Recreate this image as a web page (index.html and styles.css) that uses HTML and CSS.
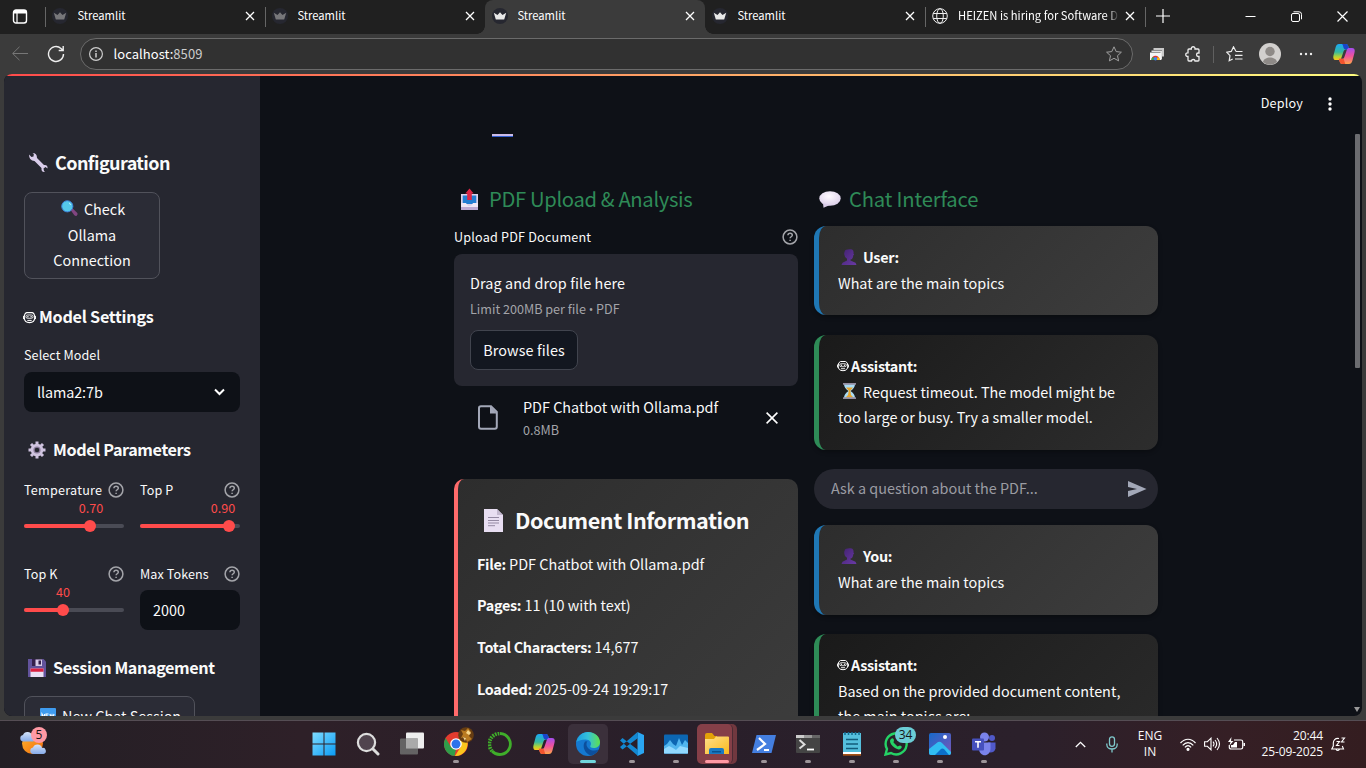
FILE: index.html
```html
<!DOCTYPE html>
<html lang="en">
<head>
<meta charset="utf-8">
<title>Streamlit</title>
<link rel="stylesheet" href="styles.css">
</head>
<body>
<svg class="defs" aria-hidden="true">
  <defs>
    <linearGradient id="cpA" x1="0" y1="0" x2="0" y2="1"><stop offset="0" stop-color="#1ba8f5"/><stop offset=".5" stop-color="#35b8a0"/><stop offset=".8" stop-color="#b7d433"/><stop offset="1" stop-color="#ffc21a"/></linearGradient>
    <linearGradient id="cpB" x1="0" y1="0" x2="0" y2="1"><stop offset="0" stop-color="#a34df0"/><stop offset=".5" stop-color="#f0529c"/><stop offset="1" stop-color="#ffa54a"/></linearGradient>
    <linearGradient id="winG" x1="0" y1="0" x2="1" y2="1"><stop offset="0" stop-color="#7fdcff"/><stop offset="1" stop-color="#0a9bf5"/></linearGradient>
    <linearGradient id="edgeG" x1="0" y1="0" x2="1" y2="0"><stop offset="0" stop-color="#1b9de2"/><stop offset=".5" stop-color="#35c1d8"/><stop offset="1" stop-color="#5fe04c"/></linearGradient>
    <linearGradient id="foldG" x1="0" y1="0" x2="1" y2="1"><stop offset="0" stop-color="#ffe08a"/><stop offset="1" stop-color="#fbb91c"/></linearGradient>
    <linearGradient id="sunG" x1="0" y1="0" x2="1" y2="1"><stop offset="0" stop-color="#ffb52e"/><stop offset="1" stop-color="#f06a0c"/></linearGradient>
    <linearGradient id="cloudG" x1="0" y1="0" x2="0" y2="1"><stop offset="0" stop-color="#d5e4fb"/><stop offset="1" stop-color="#86abe9"/></linearGradient>
    <linearGradient id="phG" x1="0" y1="0" x2="1" y2="1"><stop offset="0" stop-color="#1669c9"/><stop offset="1" stop-color="#7a55b8"/></linearGradient>
    <linearGradient id="userG" x1="0" y1="0" x2="1" y2="1"><stop offset="0" stop-color="#422270"/><stop offset="1" stop-color="#6a3aa6"/></linearGradient>
    <radialGradient id="bubG" cx=".45" cy=".35" r=".7"><stop offset="0" stop-color="#fffaff"/><stop offset="1" stop-color="#d9cce8"/></radialGradient>
    <symbol id="x" viewBox="0 0 10 10"><path d="M1 1l8 8M9 1L1 9" fill="none" stroke="currentColor" stroke-width="1.3"/></symbol>
    <symbol id="crown" viewBox="0 0 16 16"><circle cx="8" cy="8" r="8" fill="#262730"/><path d="M1.800 4.800L5.500 7 8 4.300 10.500 7l3.700-2.200-2 6.700H3.800z" fill="currentColor"/></symbol>
    <symbol id="help" viewBox="0 0 16 16"><circle cx="8" cy="8" r="6.900" fill="none" stroke="currentColor" stroke-width="1.500"/><path d="M5.900 6.300c.1-1.200 1-2 2.200-2s2.200.8 2.200 1.900c0 1.500-2.200 1.600-2.200 3.100M8.100 10.700v1.300" fill="none" stroke="currentColor" stroke-width="1.500"/></symbol>
    <symbol id="robot" viewBox="0 0 12 12"><path d="M3.500 1.500h5q2.300.5 2.300 4.500 0 4.700-4.800 4.700T1.200 6q0-4 2.300-4.500z" fill="none" stroke="#fff"/><path d="M.5 4.500v3M11.500 4.500v3M4 8.700h4" fill="none" stroke="#fff" stroke-width=".9"/><rect x="2.700" y="3.700" width="6.600" height="3" rx="1.400" fill="none" stroke="#fff" stroke-width=".8"/><circle cx="4.500" cy="5.200" r=".7" fill="#fff"/><circle cx="7.500" cy="5.200" r=".7" fill="#fff"/></symbol>
    <symbol id="user" viewBox="0 0 16 16"><path d="M4 1.500C5 .2 8 .2 10 .2q3 .5 2.500 4.500l.7 1-.9.5q-.3 4-2.800 4.400v.8l5 2.300 1 2.300H.5l1-2.300 4.500-2.300V9.700Q3 8 3.200 4z" fill="url(#userG)"/></symbol>
    <symbol id="copilot" viewBox="0 0 22 22"><path d="M6 1h6.500c2 0 2.500 1 3 3l.7 2.500h-3.500q-1.500 0-2 1.500L8.500 14.500C7.800 16.500 7.300 17 5.500 17H3C-.2 17 0 14 .7 11.500l2-7.500C3.300 2 4.300 1 6 1z" fill="url(#cpA)"/><path d="M9 1h3.800c2 0 2.300 1.200 3 3.500l.5 2h-3.600q-2 0-2.500-3C10 2.300 9.700 1.500 9 1z" fill="#1a45cb"/><path d="M16 21H9.500c-2 0-2.500-1-3-3l-.7-2.200h3.500q1.500 0 2-1.500l2.300-6.800C14.300 5.500 14.800 5 16.500 5H19c3.200 0 3 3 2.300 5.500l-2 7.500c-.6 2-1.600 3-3.300 3z" fill="url(#cpB)"/><path d="M5.800 15.800h3.500q2 0 2 2.200l1 3H9.500c-2 0-2.500-1-3-3z" fill="#f3542e"/></symbol>
  </defs>
</svg>

<div class="tabstrip">
  <div class="workspace"><svg width="16" height="15" viewBox="0 0 16 15"><rect x="1.500" y="1" width="13" height="13" rx="2.500" fill="none" stroke="#fff" stroke-width="1.400"/><path d="M1.500 3q0-2 2-2h9q2 0 2 2v1.500h-13z" fill="#fff"/><path d="M5 4v10" stroke="#fff" stroke-width="1.200"/></svg></div>
  <div class="tab sep"><svg class="fav dim"><use href="#crown"/></svg><span>Streamlit</span><svg class="x"><use href="#x"/></svg></div>
  <div class="tab sep"><svg class="fav dim"><use href="#crown"/></svg><span>Streamlit</span><svg class="x"><use href="#x"/></svg></div>
  <div class="tab active"><svg class="fav"><use href="#crown"/></svg><span>Streamlit</span><svg class="x"><use href="#x"/></svg></div>
  <div class="tab"><svg class="fav"><use href="#crown"/></svg><span>Streamlit</span><svg class="x"><use href="#x"/></svg></div>
  <div class="tab sep"><svg class="fav" viewBox="0 0 16 16" fill="none" stroke="#eee"><circle cx="8" cy="8" r="7.300"/><ellipse cx="8" cy="8" rx="3.300" ry="7.300"/><path d="M1.200 5.500h13.600M1.200 10.500h13.600"/></svg><span class="fade">HEIZEN is hiring for Software D</span><svg class="x"><use href="#x"/></svg></div>
  <div class="newtab sep"><svg width="14" height="14" viewBox="0 0 14 14"><path d="M7 0v14M0 7h14" stroke="#fff" stroke-width="1.200"/></svg></div>
  <div class="winctl">
    <svg width="11" height="11" viewBox="0 0 11 11"><path d="M.5 5.500h10" stroke="#fff"/></svg>
    <svg width="11" height="11" viewBox="0 0 11 11" fill="none" stroke="#fff"><rect x=".5" y="2.500" width="8" height="8" rx="1.500"/><path d="M2.500 .8h5.500q2.500 0 2.500 2.500v5"/></svg>
    <svg width="11" height="11" viewBox="0 0 11 11"><path d="M.5.5l10 10M10.500.5l-10 10" stroke="#fff" stroke-width="1.200"/></svg>
  </div>
</div>

<div class="toolbar">
  <svg class="back" width="17" height="16" viewBox="0 0 17 16" fill="none" stroke="#777"><path d="M16 7.500H.7M7.500.8L.7 7.500l6.800 6.700"/></svg>
  <svg class="reload" width="18" height="18" viewBox="0 0 18 18" fill="none" stroke="#eee" stroke-width="1.400"><path d="M16.500 9A7.500 7.500 0 1 1 14 3.400L16 5.200M16.200 1v4.500h-4.500"/></svg>
  <div class="address">
    <svg width="14" height="14" viewBox="0 0 14 14" fill="none" stroke="#ccc" stroke-width="1.200"><circle cx="7" cy="7" r="6.400"/><path d="M7 6v4.500M7 3.500V5" stroke-width="1.500"/></svg>
    <span>localhost:<i>8509</i></span>
    <svg class="star" width="16" height="16" viewBox="0 0 16 16" fill="none" stroke="#a0a0a0"><path d="M8 .8l2.200 4.800 5.200.6-3.900 3.500 1.100 5.200L8 12.300l-4.600 2.600 1.100-5.200L.6 6.200l5.200-.6z"/></svg>
  </div>
  <div class="tools">
    <svg width="16" height="16" viewBox="0 0 16 16"><path d="M4.500 2h10.500v8.500h-2V4h-8.500z" fill="#c9c9c9"/><path d="M2.500 4.500H13v9h-1.500V6h-9z" fill="#e2e2e2"/><path d="M1 6.500h11V14H1z" fill="#f5f5f5"/><path d="M2.300 14a4.200 4.200 0 0 1 8.400 0z" fill="#e2382c"/><path d="M2.300 14a4.200 4.200 0 0 1 1.700-3.300l2 3.300z" fill="#34a853"/><path d="M10.700 14A4.200 4.200 0 0 0 9 10.700L7 14z" fill="#fbbc04"/><circle cx="6.500" cy="12.800" r="1.700" fill="#4285f4"/></svg>
    <svg width="17" height="17" viewBox="0 0 17 17" fill="none" stroke="#eee" stroke-width="1.300"><path d="M4 3h2.300c-.3-3 4-3 3.700 0h3q1 0 1 1v3h-.8c-2.200 0-2.200 3.500 0 3.500h.8V14q0 1-1 1h-3c0-2-3.500-2-3.500 0H4q-1 0-1-1v-3.500c-3 .3-3-4 0-3.700V4q0-1 1-1z"/></svg>
    <b class="vline"></b>
    <svg width="17" height="16" viewBox="0 0 17 16" fill="none" stroke="#eee" stroke-width="1.200"><path d="M10 5.500L7.500.8 5.300 5.400.7 6.200 4 9.600l-.8 5.200 3.500-1.800M10 5.500h6.500M9 9.300h7.500M9 13h7.500"/></svg>
    <svg width="22" height="22" viewBox="0 0 22 22"><circle cx="11" cy="11" r="11" fill="#d2d0ce"/><circle cx="11" cy="8.500" r="4.700" fill="#8e8a87"/><path d="M4 19c1-6 13-6 14 0q-3 2.800-7 2.800T4 19z" fill="#8e8a87"/></svg>
    <svg width="14" height="4" viewBox="0 0 14 4" fill="#eee"><circle cx="2" cy="2" r="1.200"/><circle cx="7" cy="2" r="1.200"/><circle cx="12" cy="2" r="1.200"/></svg>
    <svg width="22" height="22"><use href="#copilot"/></svg>
  </div>
</div>

<div class="viewport">
  <div class="rainbow"></div>
  <aside class="sidebar">
    <h2 class="conf"><svg width="20" height="20" viewBox="0 0 20 20"><path d="M1 1.500L3.500 4l2-.5L5.800 1 4.500 0Q9 0 9 5l7 7q4-.5 3.500 3.500L17.500 14l-2 1.500.5 2.500 1 1q-4 .5-3.500-4L6.500 8Q1 8 1 1.500z" fill="#d9cdea"/></svg><span>Configuration</span></h2>
    <div class="btn check"><div><svg width="17" height="17" viewBox="0 0 17 17"><path d="M9.500 10l2-1.800 4.800 4.800q.8 1.500-.6 2.700-1.200.8-2.500-.6z" fill="#814581"/><circle cx="6.300" cy="6.300" r="5.600" fill="#55c8eb" stroke="#3d80d6"/><path d="M8 3q1.500.5 1.500 2" stroke="#b5efff" fill="none"/></svg><span>Check</span></div><div>Ollama</div><div>Connection</div></div>
    <h3 class="ms"><svg width="13" height="13"><use href="#robot"/></svg><span>Model Settings</span></h3>
    <label class="lab sm">Select Model</label>
    <div class="select"><span>llama2:7b</span><svg width="11" height="8" viewBox="0 0 11 8"><path d="M1 1.500l4.500 4.500L10 1.500" fill="none" stroke="#fff" stroke-width="2"/></svg></div>
    <h3 class="mp"><svg width="18" height="18" viewBox="0 0 18 18"><g stroke="#cfc3df" stroke-width="3"><path d="M9 .5v17M.5 9h17M3 3l12 12M15 3L3 15"/></g><circle cx="9" cy="9" r="6.300" fill="#cfc3df"/><circle cx="9" cy="9" r="3.600" fill="#8b7c9b"/><circle cx="9" cy="9" r="2.300" fill="#262730"/></svg><span>Model Parameters</span></h3>
    <div class="params">
      <div class="param"><div class="lab temp">Temperature<svg class="help"><use href="#help"/></svg></div><div class="val" style="left:67px">0.70</div><div class="track"><b style="width:66px"></b></div></div>
      <div class="param"><div class="lab">Top P<svg class="help"><use href="#help"/></svg></div><div class="val" style="left:83px">0.90</div><div class="track"><b style="width:89px"></b></div></div>
      <div class="param"><div class="lab">Top K<svg class="help"><use href="#help"/></svg></div><div class="val" style="left:39px">40</div><div class="track"><b style="width:39px"></b></div></div>
      <div class="param"><div class="lab">Max Tokens<svg class="help"><use href="#help"/></svg></div><div class="number">2000</div></div>
    </div>
    <h3 class="sess"><svg width="18" height="18" viewBox="0 0 18 18"><path d="M0 0h15.500L18 2.500V18H0z" fill="#62539c"/><path d="M4 0h10v7H4z" fill="#34204b"/><path d="M7.500.5h6.500V7H7.500z" fill="#d8cce8"/><path d="M10.500 1.500h2.500v4h-2.500z" fill="#34204b"/><path d="M2.500 9.500h13V18h-13z" fill="#eadff5"/><path d="M2.500 9.500h13v3.300h-13z" fill="#d92041"/></svg><span>Session Management</span></h3>
    <div class="btn newchat"><svg width="16" height="16" viewBox="0 0 16 16"><rect width="16" height="16" rx="1" fill="#3f9cf0"/><path d="M2 10V6l2.500 4V6M8.500 6H6v4h2.500M6 8h2M10 6l1 4 1-3 1 3 1-4" fill="none" stroke="#fff" stroke-width="1.100"/></svg><span>New Chat Session</span></div>
  </aside>

  <main class="main">
    <header class="apphead"><span>Deploy</span><svg width="4" height="14" viewBox="0 0 4 14" fill="#fff"><circle cx="2" cy="2" r="1.700"/><circle cx="2" cy="7" r="1.700"/><circle cx="2" cy="12" r="1.700"/></svg></header>
    <div class="dash"></div>
    <div class="columns">
      <section class="col">
        <h1><svg width="20" height="23" viewBox="0 0 20 23"><path d="M1 6h17v16H1z" fill="#ddd2ea"/><path d="M2.700 7.500h13.600V16H2.700z" fill="#237dd1"/><path d="M1 18h17v4H1z" fill="#bba9d2"/><path d="M1 15h5l2 3h3l2-3h5v4H1z" fill="#eee6f5"/><path d="M9.500.5l4.200 5h-1.900V12H7.200V5.500H5.300z" fill="#dc2646"/></svg><span class="t-up">PDF Upload &amp; Analysis</span></h1>
        <div class="lab uplab">Upload PDF Document<svg class="help"><use href="#help"/></svg></div>
        <div class="drop"><p>Drag and drop file here</p><small>Limit 200MB per file <i>•</i> PDF</small><div class="browse">Browse files</div></div>
        <div class="file"><svg width="20" height="25" viewBox="0 0 20 25"><path d="M3 1.200h10L18.800 7v14.500q0 2.300-2 2.300H3q-2 0-2-2V3q0-1.800 2-1.800z" fill="none" stroke="#a3a8b8" stroke-width="2"/><path d="M12 1v7.500h7z" fill="#a3a8b8"/></svg><div><p>PDF Chatbot with Ollama.pdf</p><small>0.8MB</small></div><svg class="rm" width="12" height="12" viewBox="0 0 10 10"><path d="M.5.5l9 9M9.500.5l-9 9" stroke="#fff" stroke-width="1.300"/></svg></div>
        <div class="doc">
          <h2><svg width="19" height="23" viewBox="0 0 19 23"><path d="M0 0h13l6 6v17H0z" fill="#e8def2"/><path d="M13 0v6h6z" fill="#c3b8cf"/><path d="M4 8.500h11M4 11.500h11M4 14h11M4 16.700h7" stroke="#9489a3"/></svg><span>Document Information</span></h2>
          <p><b>File:</b> PDF Chatbot with Ollama.pdf</p>
          <p><b>Pages:</b> 11 (10 with text)</p>
          <p><b>Total Characters:</b> 14,677</p>
          <p><b>Loaded:</b> 2025-09-24 19:29:17</p>
        </div>
      </section>
      <section class="col">
        <h1 class="chat"><svg width="22" height="17" viewBox="0 0 22 17"><ellipse cx="11" cy="7.500" rx="10.700" ry="7.300" fill="url(#bubG)"/><path d="M4 12l.5 4.700L11 14z" fill="#d9cce8"/></svg><span>Chat Interface</span></h1>
        <div class="msg you"><div class="who"><svg width="16" height="16"><use href="#user"/></svg><b>User:</b></div><p>What are the main topics</p></div>
        <div class="msg bot"><div class="who"><svg width="12" height="12"><use href="#robot"/></svg><b>Assistant:</b></div><p class="wait"><svg width="13" height="16" viewBox="0 0 13 16"><path d="M1 1h11q0 4-4.500 7 4.500 3 4.500 7H1q0-4 4.500-7Q1 5 1 1z" fill="#a9dcf5"/><path d="M3 4.500h7L7.300 7.700 8 12l2.500 2.500h-8L5 12l.8-4.300z" fill="#e9a52e"/><path d="M0 0h13v1.700H0zM0 14.300h13V16H0z" fill="#948da0"/></svg>Request timeout. The model might be</p><p>too large or busy. Try a smaller model.</p></div>
        <div class="ask"><span>Ask a question about the PDF...</span><svg width="19" height="16" viewBox="0 0 19 16"><path d="M0 0l18.500 8L0 16v-6l9-2-9-2z" fill="#a3a8b8"/></svg></div>
        <div class="msg you"><div class="who"><svg width="16" height="16"><use href="#user"/></svg><b>You:</b></div><p>What are the main topics</p></div>
        <div class="msg bot last"><div class="who"><svg width="12" height="12"><use href="#robot"/></svg><b>Assistant:</b></div><p>Based on the provided document content,</p><p>the main topics are:</p></div>
      </section>
    </div>
    <div class="thumb"></div><div class="arrow"></div>
  </main>
</div>

<div class="taskbar">
  <div class="weather"><svg width="28" height="28" viewBox="0 0 28 28"><circle cx="12.500" cy="15.500" r="10.500" fill="url(#sunG)"/><path d="M3 13.500a3.300 3.300 0 0 1 0-6.500 4.700 4.700 0 0 1 9 .5 3 3 0 0 1 1 6z" fill="url(#cloudG)"/><path d="M13 26a3.300 3.300 0 0 1 0-6.500 4.700 4.700 0 0 1 9 .5 3 3 0 0 1 1.500 6z" fill="url(#cloudG)"/></svg><span class="badge red">5</span></div>
  <div class="apps">
    <div class="app"><svg viewBox="0 0 24 24" fill="url(#winG)"><path d="M.5.500h11v11h-11zM12.500.500h11v11h-11zM.5 12.500h11v11h-11zM12.500 12.500h11v11h-11z"/></svg></div>
    <div class="app"><svg viewBox="0 0 24 24"><circle cx="10.500" cy="10.500" r="8.600" fill="#50444e" stroke="#ddd" stroke-width="2.200"/><path d="M17 17l5 5" stroke="#ddd" stroke-width="3" stroke-linecap="round"/></svg></div>
    <div class="app"><svg viewBox="0 0 24 24"><rect x="6" y=".5" width="18" height="16" rx="1" fill="#eee"/><rect x="0" y="6.500" width="18" height="16" rx="1" fill="#686868" opacity=".93"/><path d="M6 6.500h12v10H6z" fill="#aaa"/></svg></div>
    <div class="app run"><svg viewBox="0 0 24 24"><circle cx="12" cy="12" r="12" fill="#e33b2e"/><path d="M1.600 6L7 15l5 2.500L10.500 24A12 12 0 0 1 1.600 6z" fill="#2f9e4a"/><path d="M22.500 7H12l5 7.500-6 9.400A12 12 0 0 0 22.500 7z" fill="#fbc61d"/><circle cx="12" cy="12" r="5.800" fill="#fff"/><circle cx="12" cy="12" r="4.500" fill="#2d72ea"/></svg><svg class="face" viewBox="0 0 16 16"><circle cx="8" cy="8" r="7.800" fill="#663c12"/><path d="M3 3l4 1 3-3 3 4-2 4 3 3-5 3-2-5-4 1 2-4z" fill="#b97a20"/><path d="M10 3l3 3-2 2-3-2zM5 10l3 1-1 3z" fill="#f7d68a"/></svg></div>
    <div class="app"><svg viewBox="0 0 24 24" fill="none" stroke="#3fae2a"><path d="M12 1.500a10.500 10.500 0 1 1-8 17.500" stroke-width="2.800"/><path d="M4 19A10.500 10.500 0 0 1 12 1.500" stroke-width="3.800" stroke-dasharray="1.700 1"/></svg></div>
    <div class="app"><svg viewBox="-1 -1 24 24"><use href="#copilot" width="22" height="22"/></svg></div>
    <div class="app run focus"><svg viewBox="0 0 24 24"><circle cx="12" cy="12" r="12" fill="#1579d0"/><path d="M.3 10C1.500 4 6.500 0 12 0c7.500 0 12 5.500 12 10 0 4-3 6-6.500 6-2.500 0-4-1-3-2.500C16 11 14 7.500 9.500 7.500 5 7.500 1.500 9 .3 10z" fill="url(#edgeG)"/><path d="M9 9.500c-3 4-1 12 6 14 3-.5 6-3 7.500-6-5 2.500-11 .5-12-4.500q-.3-2.500 1-3.800z" fill="#0c4f9c"/></svg></div>
    <div class="app run"><svg viewBox="0 0 24 24"><path d="M17.500 0L24 3v18l-6.500 3z" fill="#2aa6f2"/><path d="M17.500 0L0 15l2.500 2.500L18 6zM0 8.500L2.500 6 18 18v6z" fill="#1388d2"/></svg></div>
    <div class="app run"><svg viewBox="0 0 24 24"><rect y="2.500" width="24" height="19" rx="1" fill="#0c66b2"/><path d="M0 14l3-2 3-4 3 4 3 2 3-8 3 7 3-5 3 3v9.500q0 1-1 1H1q-1 0-1-1z" fill="#50b5ee"/><path d="M0 17l5-3 4 2 3 2 4-4 8 2v5.500H0z" fill="#91d9ff"/></svg></div>
    <div class="app run files"><svg viewBox="0 0 24 24"><path d="M0 3q0-2 2-2h5l2.500 3H12v4H0z" fill="#e3a108"/><path d="M0 7h9l2-2.500h12q1 0 1 1V22H0z" fill="url(#foldG)"/><path d="M4 22v-4q0-2 2-2h11q2 0 2 2v4z" fill="#197ac4"/><path d="M7 19h9v1.500H7z" fill="#07518f"/></svg></div>
    <div class="app run"><svg viewBox="0 0 24 24"><path d="M4.500 3H24l-4.500 18H0z" fill="#447fe0"/><path d="M7 6l6 6-8 6M12 18h5" fill="none" stroke="#fff" stroke-width="2.200"/></svg></div>
    <div class="app run"><svg viewBox="0 0 24 24"><rect y="3" width="24" height="18" rx="1" fill="#444"/><path d="M0 3h8v3H0z" fill="#ccc"/><path d="M8 3h8v3H8z" fill="#999"/><path d="M16 3h8v3h-8z" fill="#666"/><path d="M3.500 8l5 4.500-5 4" fill="none" stroke="#ddd" stroke-width="2"/><path d="M11 17.500h7" stroke="#fff" stroke-width="1.800"/></svg></div>
    <div class="app run"><svg viewBox="0 0 24 24"><rect x="3" y="1" width="18" height="21" fill="#55bfdd"/><path d="M3 20h18v2H3z" fill="#fff"/><path d="M3 22h18v1.700H3z" fill="#a65217"/><path d="M6 7.500h12M6 12h12M6 16.500h12" stroke="#125c7b" stroke-width="1.500"/><path d="M5 0v3M8.500 0v3M12 0v3M15.500 0v3M19 0v3" stroke="#126b91" stroke-width="1.500"/></svg></div>
    <div class="app run"><svg viewBox="0 0 24 24"><path d="M1.500 22.500L3 17A10.500 10.500 0 1 1 7 21z" fill="#282129" stroke="#25d366" stroke-width="2.400"/><path d="M7 7q2-2 3 1l-.5 2.500 4 4 2.500-1q3 1 1 3-2 2-6-.5-5-3.500-5-7Q6 8 7 7z" fill="#25d366"/></svg><span class="badge cyan">34</span></div>
    <div class="app run"><svg viewBox="0 0 24 24"><rect x="1" y="1" width="22" height="22" rx="2" fill="url(#phG)"/><path d="M1 17l9-7q2-1 4 1l9 9v1q0 2-2 2H3q-2 0-2-2z" fill="#31bdf2"/><path d="M7 23l6-6q1-1 3 0l5 6z" fill="#0b6fc9"/><circle cx="17" cy="5" r="2" fill="#fff"/></svg></div>
    <div class="app run"><svg viewBox="0 0 24 24"><circle cx="12.500" cy="5" r="4.500" fill="#7b83eb"/><circle cx="20" cy="6" r="3" fill="#5059c9"/><path d="M16 10.500h7.500v6q-1 4.500-6 4z" fill="#5059c9"/><path d="M7 10.500h11.500v6c0 9-11.500 9-11.500 0z" fill="#7b83eb"/><rect y="6.500" width="12" height="12" rx="1" fill="#4650bd"/><path d="M3 9.700h6M6 9.700v6" stroke="#fff" stroke-width="1.600"/></svg></div>
  </div>
  <div class="tray">
    <svg class="up" width="11" height="7" viewBox="0 0 11 7"><path d="M.8 6L5.500 1.300 10.200 6" fill="none" stroke="#fff" stroke-width="1.300"/></svg>
    <svg class="mic" width="12" height="17" viewBox="0 0 12 17" fill="none" stroke="#7fc8cc" stroke-width="1.300"><rect x="3.500" y=".8" width="5" height="9.500" rx="2.500"/><path d="M.8 7.500v1c0 6 10.400 6 10.400 0v-1M6 13v3.500"/></svg>
    <div class="lang"><span>ENG</span><span>IN</span></div>
    <svg class="wifi" width="16" height="13" viewBox="0 0 16 13" fill="none" stroke="#fff" stroke-width="1.200"><path d="M.5 5c4.500-5 10.500-5 15 0M2.700 7.300c3.200-3.700 7.400-3.700 10.600 0M4.900 9.400c2-2.300 4.200-2.300 6.200 0"/><circle cx="8" cy="11.300" r="1" fill="#fff"/></svg>
    <svg class="vol" width="17" height="14" viewBox="0 0 17 14" fill="none" stroke="#fff" stroke-width="1.100"><path d="M.6 4.700h2.800L7 1.200v11.600L3.400 9.300H.6zM9 4.700q2 2.300 0 4.600M11 3q3.400 4 0 8M13 1q5 6 0 12"/></svg>
    <svg class="bat" width="17" height="14" viewBox="0 0 17 14"><path d="M6 3h7q1.700 0 1.700 1.700v5.600q0 1.700-1.700 1.700H3q-1.700 0-1.700-1.700V8" fill="none" stroke="#fff" stroke-width="1.200"/><path d="M15.500 6h1.500v3h-1.500zM3 8h2l2-3h2v5.500H3zM3.500 0L0 5h2.500l-1 3.500L5.500 4H3z" fill="#fff"/></svg>
    <div class="clock"><span>20:44</span><span>25-09-2025</span></div>
    <svg class="bell" width="15" height="15" viewBox="0 0 15 15" fill="none" stroke="#fff" stroke-width="1.100"><path d="M8 1.500C4 .8 2.300 3.500 2.300 6v3L.8 12h11.700l-1.200-3M5 12.300q1.500 2.500 3.500 0M5.500 4.500h3l-3 4h3M10.500 1h3l-3 4h3"/></svg>
  </div>
</div>
</body>
</html>
```

FILE: styles.css
```css
* { box-sizing: border-box; margin: 0; padding: 0; }
body { width: 1366px; height: 768px; overflow: hidden; background: #3b3b3b; color: #fafafa; font: 14.4px/26px "Noto Sans CJK SC", "Noto Sans", sans-serif; display: flex; flex-direction: column; white-space: nowrap; }
svg { flex: none; display: block; }
.defs { position: absolute; width: 0; height: 0; }
i { font-style: normal; }
small { display: block; }

/* Tab strip */
.tabstrip { height: 34px; flex: none; background: #202020; display: flex; align-items: stretch; font-size: 11.2px; line-height: 32px; }
.workspace { width: 45px; padding: 9px 0 0 12px; }
.tab { width: 220px; display: flex; align-items: center; padding: 0 10px 2px 7px; position: relative; }
.tab .fav { width: 16px; height: 16px; color: #e8e8e8; }
.tab .dim { color: #77777a; }
.tab span { margin: -2px 0 0 9.5px; flex: 1; overflow: hidden; color: #fff; }
.tab .x { width: 10px; height: 10px; color: #fff; }
.tab .fade { margin-right: 7px; margin-left: 10px; -webkit-mask-image: linear-gradient(90deg, #000 150px, transparent 161px); mask-image: linear-gradient(90deg, #000 150px, transparent 161px); }
.active { background: #3b3b3b; border-radius: 8px 8px 0 0; }
.active::before, .active::after { content: ""; position: absolute; bottom: 0; width: 8px; height: 8px; }
.active::before { left: -8px; background: radial-gradient(circle at 0 0, transparent 7.5px, #3b3b3b 8px); }
.active::after { right: -8px; background: radial-gradient(circle at 100% 0, transparent 7.5px, #3b3b3b 8px); }
.sep { background: linear-gradient(#666, #666) 0 7px / 1px 20px no-repeat; }
.newtab { width: 90px; padding: 9px 0 0 11px; }
.winctl { display: flex; gap: 35px; padding: 11px 0 0 10px; }

/* Toolbar */
.toolbar { height: 40px; flex: none; display: flex; align-items: center; padding-left: 12px; }
.reload { margin-left: 18px; }
.address { width: 1053px; height: 32px; margin-left: 15px; border: 1px solid #6b6b6b; border-radius: 16px; background: #313131; display: flex; align-items: center; padding: 0 10px 0 8px; font-size: 13px; color: #fff; }
.address span { margin-left: 10.5px; letter-spacing: .05px; }
.address i { color: #ccc; }
.star { margin-left: auto; }
.tools { display: flex; align-items: center; flex: 1; margin-left: 16px; }
.tools > :nth-child(2) { margin-left: 20px; }
.vline { width: 1px; height: 17px; background: #606060; margin-left: 11px; }
.tools > :nth-child(4) { margin-left: 12px; }
.tools > :nth-child(5) { margin-left: 16px; }
.tools > :nth-child(6) { margin-left: 18px; }
.tools > :nth-child(7) { margin-left: 20px; }

/* Page */
.viewport { position: relative; height: 642px; flex: none; margin: 0 4px; border-radius: 8px; overflow: hidden; display: flex; background: #0e1117; padding-top: 2px; }
.rainbow { position: absolute; left: 0; right: 0; top: 0; height: 2px; background: linear-gradient(90deg, #ff4b4b, #fffd80); }
.sidebar { width: 256px; flex: none; background: #262730; padding: 75px 20px 0; display: flex; flex-direction: column; }
.sidebar h2, .sidebar h3 { display: flex; align-items: center; height: 24px; line-height: 24px; font-weight: 600; flex: none; }
.sidebar h2 span, .sidebar h3 span { margin-top: -2px; }
.sidebar h2 { font-size: 18px; padding-left: 4px; gap: 7px; letter-spacing: -.58px; }
.sidebar h3 { font-size: 16.2px; padding-left: 4px; gap: 7px; letter-spacing: -.4px; }
.sidebar h3.ms { padding-left: 0; gap: 3px; margin: 26px 0 0 -1px; letter-spacing: -.25px; }
.btn { border: 1px solid #51525b; border-radius: 8px; background: #2b2c36; flex: none; }
.check { width: 136px; height: 87px; margin-top: 17px; padding-top: 3px; text-align: center; line-height: 25.600px; }
.check div:first-child { display: flex; justify-content: center; align-items: center; gap: 6px; padding-left: 2px; }
.lab { font-size: 12.600px; line-height: 20px; height: 20px; display: flex; align-items: center; justify-content: space-between; flex: none; letter-spacing: .08px; }
.temp { letter-spacing: .25px; }
.help { width: 16px; height: 16px; color: #a3a4a9; }
.sm { margin-top: 16px; }
.select { height: 40px; margin-top: 7px; background: #0e1117; border-radius: 8px; display: flex; align-items: center; justify-content: space-between; padding: 0 15px 0 13px; flex: none; letter-spacing: -.1px; }
.mp { margin-top: 26px; }
.params { display: grid; grid-template-columns: 100px 100px; gap: 0 16px; margin-top: 18px; grid-auto-rows: 84px; height: 176px; flex: none; }
.param { position: relative; }
.val { position: absolute; top: 19px; line-height: 18px; color: #ff4b4b; font-size: 12.600px; transform: translateX(-50%); }
.track { height: 4px; margin-top: 24px; border-radius: 2px; background: #4a4b55; }
.track b { display: block; height: 4px; background: #ff4b4b; position: relative; border-radius: 2px; }
.track b::after { content: ""; position: absolute; right: -6px; top: -4px; width: 12px; height: 12px; border-radius: 6px; background: #ff4b4b; }
.number { height: 40px; margin-top: 6px; border-radius: 8px; background: #0e1117; line-height: 39px; padding-left: 13px; }
.newchat { width: 171px; height: 40px; margin-top: 16px; display: flex; align-items: center; padding-left: 15px; gap: 6px; }

.main { flex: 1; position: relative; }
.apphead { height: 56px; display: flex; align-items: center; justify-content: flex-end; padding-right: 30px; gap: 25px; font-size: 12.600px; letter-spacing: .2px; }
.apphead span { margin-top: -2px; }
.dash { width: 21px; height: 3px; margin: 2px 0 0 232px; background: linear-gradient(#cbbce8 66%, #315ed0 66%); }
.columns { display: flex; gap: 16px; padding: 50px 0 0 194px; }
.col { width: 344px; display: flex; flex-direction: column; }
h1 { display: flex; align-items: center; height: 26px; font-weight: 400; font-size: 20.200px; line-height: 26px; color: #2e8b57; padding-left: 6px; gap: 9px; letter-spacing: -.33px; }
h1 svg, h1 span { margin-top: -2px; }
h1.chat { padding-left: 5px; gap: 8px; letter-spacing: -.15px; }
.uplab { margin-top: 14px; letter-spacing: .2px; }
.drop { height: 132px; margin-top: 7px; background: #262730; border-radius: 8px; padding: 16px; }
.drop p { letter-spacing: .1px; line-height: 25px; }
small { font-size: 12.600px; line-height: 20px; color: #a3a4a9; }
small i { font-family: "Open Sans", sans-serif; font-size: 12px; }
.drop small { margin-top: 4px; }
.browse { width: 108px; height: 40px; margin-top: 10px; border: 1px solid #41444e; border-radius: 8px; background: #131720; line-height: 37px; text-align: center; letter-spacing: .1px; }
.file { display: flex; align-items: center; height: 61px; padding: 1px 20px 0 24px; }
.file > div { margin-left: 25px; flex: 1; padding-top: 0; }
.file small { line-height: 20px; }
.file .rm { margin-top: 1px; }
.doc { margin-top: 32px; height: 300px; border-left: 4px solid #ff6b6b; border-radius: 10px; background: linear-gradient(135deg, #2d2d2d, #3d3d3d); padding: 26px 19px; }
.doc h2 { display: flex; align-items: center; font-size: 21.600px; line-height: 32px; font-weight: 600; gap: 12px; padding-left: 7px; letter-spacing: -.45px; }
.doc h2 span { margin-top: -1px; }
.doc p { margin-top: 15.800px; }
.doc h2 + p { margin-top: 14.500px; }
b { font-weight: 600; }
.doc b { letter-spacing: -.3px; }
.msg { height: 89px; border-left: 5px solid #1f77b4; border-radius: 12px; background: linear-gradient(135deg, #2d2d2d, #3d3d3d); padding: 18px 19px; flex: none; line-height: 25.600px; box-shadow: 0 2px 4px rgba(0,0,0,.3); }
h1 + .msg { margin-top: 13px; }
.msg p { height: 25.600px; }
.who { display: flex; align-items: center; height: 25.600px; padding-left: 3px; gap: 6px; }
.who b { letter-spacing: -.3px; }
.bot { height: 115px; margin-top: 20px; border-color: #2e8b57; background: linear-gradient(135deg, #1a1a1a, #2d2d2d); }
.bot .who { gap: 2px; padding-left: 0; margin-left: -1px; }
.last { height: 190px; margin-top: 19px; }
.wait { display: flex; align-items: center; gap: 7px; padding-left: 5px; letter-spacing: -.03px; }
.ask { height: 40px; margin: 19px 0 16px; border-radius: 20px; background: #262730; display: flex; align-items: center; justify-content: space-between; padding: 0 11px 0 17px; color: #9b9ca3; flex: none; }
.ask span { margin-top: -3px; }
.ask + .msg { height: 90px; }
.thumb { position: absolute; right: 2px; top: 58px; width: 5px; height: 234px; background: #6b6c70; border-radius: 1px; }
.arrow { position: absolute; right: 2px; bottom: 4px; border: 3px solid transparent; border-top: 5px solid #999; border-bottom: 0; }

/* Taskbar */
.taskbar { height: 48px; margin-top: 4px; border-top: 1px solid #554d54; background: linear-gradient(90deg, #231f25 0, #2e2028 22%, #291f2a 50%, #2b202b 75%, #351f25 90%, #341d20 100%); display: flex; position: relative; flex: none; font: 12px/16px "Open Sans", "Noto Sans", sans-serif; }
.weather { width: 302px; padding: 7px 0 0 20px; position: relative; flex: none; }
.badge { position: absolute; height: 16px; border-radius: 8px; color: #171717; text-align: center; line-height: 16px; }
.red { left: 31px; top: 6px; width: 16px; background: #ff99a4; }
.apps { display: flex; }
.app { width: 44px; height: 46px; display: flex; align-items: center; justify-content: center; position: relative; }
.app > svg { width: 24px; height: 24px; position: relative; }
.run::after { content: ""; position: absolute; bottom: 4px; left: 19px; width: 6px; height: 3px; border-radius: 2px; background: #9d9599; }
.app > .face { position: absolute; left: 24px; top: 6px; width: 16px; height: 16px; }
.focus::before, .files::before { content: ""; position: absolute; left: 2px; top: 3px; width: 40px; height: 40px; border-radius: 5px; background: #3b303b; }
.files::before { left: -1px; width: 35px; background: #853f48; border-right: 1px solid #4b2a33; box-shadow: 4px 0 0 #71383f; }
.focus::after { width: 16px; left: 14px; background: #6fd6dc; }
.files::after { width: 24px; left: 7px; background: #ff99a4; }
.files > svg { left: -3px; }
.cyan { left: 21px; top: 6px; width: 21px; background: #6bccd5; }
.tray { margin-left: auto; height: 46px; display: flex; align-items: center; padding-right: 20px; }
.up { margin-right: 20px; }
.mic { margin-right: 19px; }
.lang { text-align: center; width: 26px; margin-right: 17px; }
.lang span, .clock span { display: block; }
.wifi { margin-right: 8px; }
.vol { margin-right: 7px; }
.bat { margin-right: 13px; }
.clock { text-align: right; width: 65px; margin-right: 8px; letter-spacing: -.1px; }
```
